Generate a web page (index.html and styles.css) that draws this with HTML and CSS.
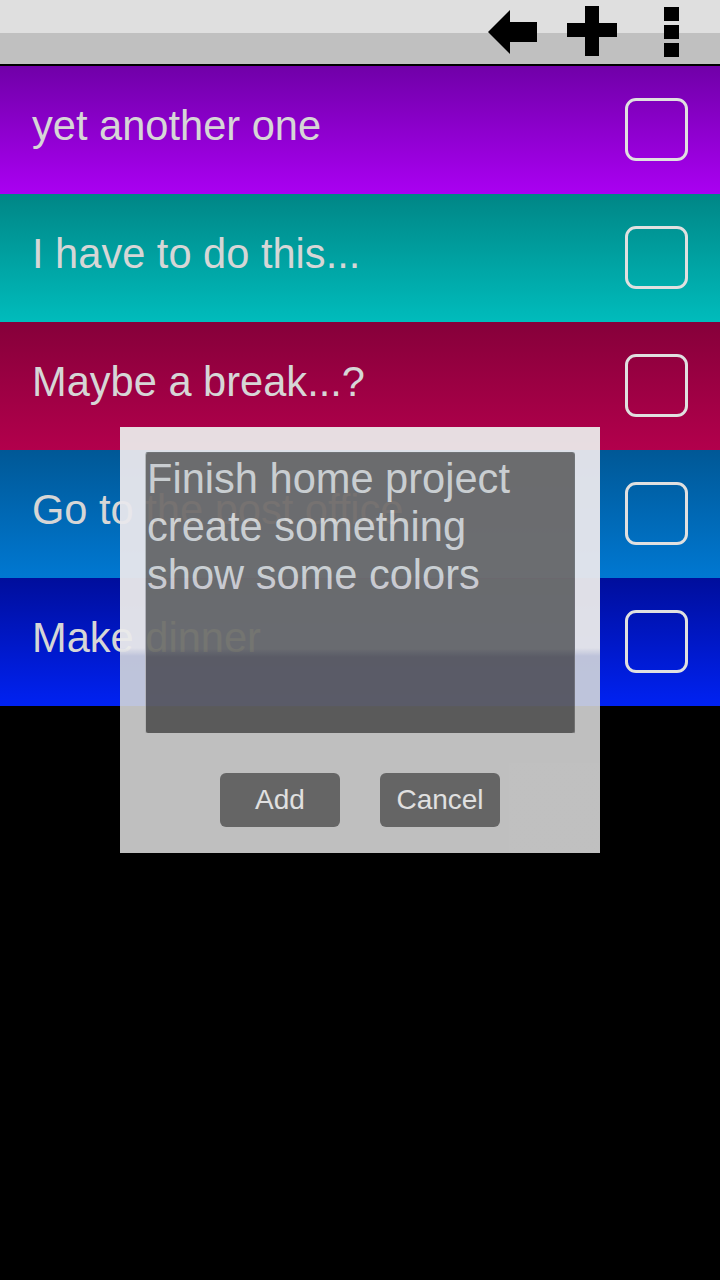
FILE: index.html
```html
<!DOCTYPE html>
<html lang="en">
<head>
<meta charset="utf-8">
<title>Todo</title>
<link rel="stylesheet" href="styles.css">
</head>
<body>
<div class="screen">
  <header class="actionbar">
    <svg class="icon icon-back" width="50" height="64" viewBox="0 0 50 64"><polygon points="0,32 22,10 22,22 49,22 49,42 22,42 22,54" fill="#000"/></svg>
    <svg class="icon icon-add" width="50" height="64" viewBox="0 0 50 64"><rect x="18" y="6" width="14" height="50" fill="#000"/><rect x="0" y="23" width="50" height="14" fill="#000"/></svg>
    <svg class="icon icon-more" width="15" height="64" viewBox="0 0 15 64"><rect x="0" y="7" width="15" height="14" fill="#000"/><rect x="0" y="25" width="15" height="14" fill="#000"/><rect x="0" y="43" width="15" height="14" fill="#000"/></svg>
  </header>
  <div class="divider"></div>
  <ul class="list">
    <li class="row row-purple"><span class="label">yet another one</span><span class="check"></span></li>
    <li class="row row-teal"><span class="label">I have to do this...</span><span class="check"></span></li>
    <li class="row row-crimson"><span class="label">Maybe a break...?</span><span class="check"></span></li>
    <li class="row row-blue"><span class="label">Go to the post office</span><span class="check"></span></li>
    <li class="row row-navy"><span class="label">Make dinner</span><span class="check"></span></li>
  </ul>

  <div class="dialog">
    <div class="editor">Finish home project<br>create something<br>show some colors</div>
    <div class="buttons">
      <button class="btn">Add</button>
      <button class="btn">Cancel</button>
    </div>
  </div>
</div>
</body>
</html>
```
FILE: styles.css
```css
html, body {
  margin: 0;
  padding: 0;
  background: #000;
}

.screen {
  position: relative;
  width: 720px;
  height: 1280px;
  background: #000;
  font-family: "Liberation Sans", Arial, sans-serif;
  overflow: hidden;
}

.actionbar {
  height: 64px;
  display: flex;
  justify-content: flex-end;
  align-items: flex-start;
  background: linear-gradient(to bottom, #dfdfdf 0, #dfdfdf 33px, #c0c0c0 33px, #c0c0c0 64px);
  padding-right: 41px;
  box-sizing: border-box;
}

.icon { display: block; }
.icon-add { margin-left: 29px; }
.icon-more { margin-left: 47px; }

.divider {
  height: 2px;
  background: #000;
}

.list {
  list-style: none;
  margin: 0;
  padding: 0;
}

.row {
  height: 128px;
  display: flex;
  align-items: center;
  justify-content: space-between;
  padding: 0 32px 8px 32px;
  box-sizing: border-box;
}

.label {
  font-size: 41.6px;
  color: #d6d6d6;
  white-space: nowrap;
}

.check {
  width: 63px;
  height: 63px;
  box-sizing: border-box;
  border: 3.5px solid #e0e0e0;
  border-radius: 11px;
  margin-top: 7px;
  flex: none;
}

.row-purple  { background: linear-gradient(to bottom, #7000a8, #aa00f2); }
.row-teal    { background: linear-gradient(to bottom, #008686, #00bcbc); }
.row-crimson { background: linear-gradient(to bottom, #86003a, #b2004c); }
.row-blue    { background: linear-gradient(to bottom, #005896, #0078d2); }
.row-navy    { background: linear-gradient(to bottom, #000e9c, #0022f2); }

/* modal overlay */
.dialog {
  position: absolute;
  left: 120px;
  top: 427px;
  width: 480px;
  height: 426px;
  box-sizing: border-box;
  padding: 25px 25px 26px 25px;
  display: flex;
  flex-direction: column;
  opacity: 0.95;
  background: linear-gradient(to bottom,
    #ebe9ea 0, #ebe9ea 23px,
    #e9e8ed 23px, #e9e8ed 151px,
    #ebebeb 151px, #ebebeb 221px,
    #c9cddb 229px, #c9cddb 279px,
    #cacaca 279px, #cacaca 426px);
}

.editor {
  height: 282px;
  box-sizing: border-box;
  border: 1px solid #767676;
  border-left-color: #bcbcbc;
  border-bottom-color: #cacaca;
  border-radius: 3px;
  padding: 2px 1px;
  font-size: 41.6px;
  line-height: 48px;
  color: #d4d4d4;
  background: linear-gradient(to bottom,
    #716d6c 0, #716d6c 126px,
    #6f706c 126px, #6f706c 196px,
    #5f5f61 204px, #5f5f61 254px,
    #5f5f5f 254px, #5f5f5f 282px);
}

.buttons {
  display: flex;
  justify-content: center;
  gap: 40px;
  margin-top: 39px;
}

.btn {
  width: 120px;
  height: 54px;
  border: none;
  border-radius: 6px;
  background: #6b6b6b;
  color: #ececec;
  font-family: "Liberation Sans", Arial, sans-serif;
  font-size: 28px;
  padding: 0;
}
```
